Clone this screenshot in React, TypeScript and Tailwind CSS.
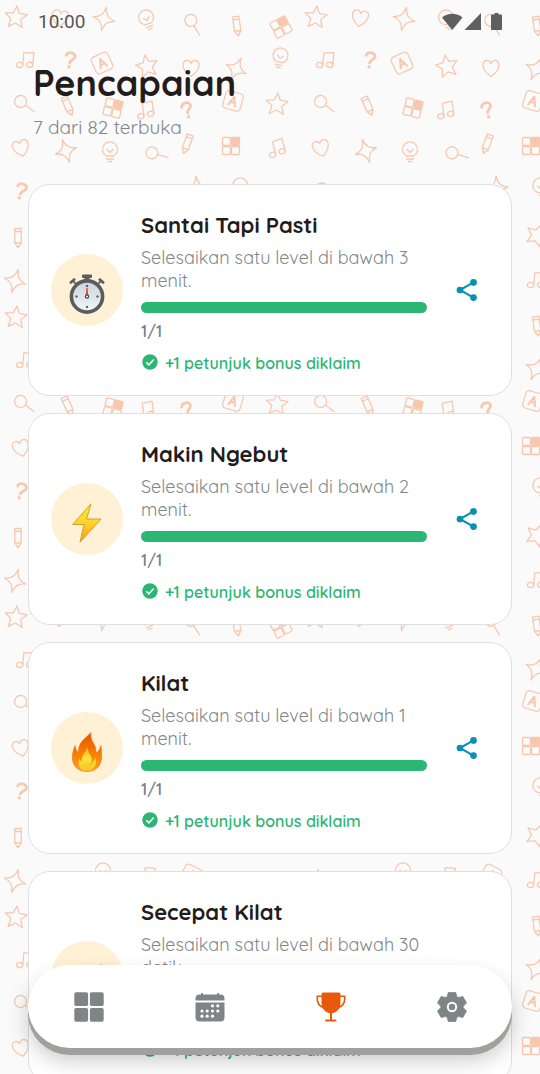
import type { ReactNode } from "react";

const STAR = "M0-11 L3-4 L11-3.2 L5 2 L7 10 L0 6 L-7 10 L-5 2 L-11-3.2 L-3-4Z";
const SPARKLE = "M0-12 C1.5-4 4-1.5 11 0 C4 1.5 1.5 4 0 12 C-1.5 4-4 1.5-11 0 C-4-1.5-1.5-4 0-12Z";

function Doodles() {
  const star = <path d={STAR} />;
  const sparkle = <path d={SPARKLE} />;
  const heart = <path d="M0 8.500 C-5 5-8 1.500-8-3 C-8-8-2-9.500 0-4.500 C2-9.500 8-8 8-3 C8 1.500 5 5 0 8.500Z" />;
  const bulb = <path d="M-3.500 4 A7.500 7.500 0 1 1 3.500 4Z M-3-2.500 L0 0.500 L3-2.500 M-3.500 7 H3.500 M-2 9.500 H2" />;
  const lens = (
    <g>
      <circle cx={-3} cy={-3} r={6} />
      <path d="M1.500 1.500 L9 9" />
    </g>
  );
  const pencil = <path d="M-3.200-9.500 H3.200 V5 L0 10 L-3.200 5Z M-3.200-6.500 H3.200 M-3.200 5 H3.200 M-1 8.500 H1" />;
  const grid = (
    <g>
      <rect x={-8.500} y={-8.500} width={8} height={8} rx={1} />
      <rect x={0.500} y={-8.500} width={8} height={8} rx={1} fill="#f7c8ae" />
      <rect x={-8.500} y={0.500} width={8} height={8} rx={1} />
      <rect x={0.500} y={0.500} width={8} height={8} rx={1} />
    </g>
  );
  const note = (
    <g>
      <ellipse cx={-6} cy={5.500} rx={3.200} ry={2.600} />
      <ellipse cx={4} cy={4.500} rx={3.200} ry={2.600} />
      <path d="M-2.800 5.500 V-7 L7.200-8 V4.500" />
    </g>
  );
  const question = (
    <g>
      <path strokeWidth={2.800} d="M-4.500-4 C-4-8.500 5-8.500 4.500-3.500 C4.200-0.500 0-0.500 0 3" />
      <circle cy={7} r={0.700} strokeWidth={2} />
    </g>
  );
  const tile = (
    <g>
      <rect x={-9} y={-9} width={18} height={18} rx={3.500} />
      <path strokeWidth={2} d="M-3.500 4.500 L0-4.500 L3.500 4.500 M-2.300 1.500 H2.300" />
    </g>
  );
  const items: [number, number, number, ReactNode][] = [
    [16, 17, 5, star], [60, 18, 10, heart], [104, 19, 12, sparkle], [147, 20, -20, bulb], [193, 24, 15, lens], [237, 26, -8, pencil], [281, 27, -28, grid],
    [26, 60, 5, note], [70, 60, 8, question], [102, 63, -25, tile], [147, 66, -12, star], [191, 68, 0, heart], [236, 69, 25, sparkle], [280, 58, 12, bulb],
    [24, 104, -8, lens], [68, 106, -24, pencil], [113, 108, 14, grid], [146, 110, -8, note], [187, 110, -14, question], [233, 101, 17, tile], [277, 104, 4, star],
    [21, 148, -15, heart], [66, 151, -18, sparkle], [110, 152, 0, bulb], [156, 154, -28, lens], [187, 144, 20, pencil], [231, 146, 0, grid], [277, 148, -15, note],
    [21, 191, 14, question], [197, 188, -5, sparkle], [241, 188, -15, bulb],
    [18, 238, 0, pencil], [237, 235, 22, star], [15, 281, 16, sparkle], [237, 280, 5, note],
    [103, 273, 0, bulb], [147, 275, 10, note], [191, 275, 27, tile],
  ];
  return (
    <svg aria-hidden="true" className="pointer-events-none absolute inset-0 h-full w-full">
      <defs>
        <pattern id="doodles" width={300} height={300} patternUnits="userSpaceOnUse">
          <g fill="none" stroke="#f7c8ae" strokeWidth={1.300} strokeLinejoin="round" strokeLinecap="round">
            {items.map(([x, y, r, shape], i) => (
              <g key={i} transform={`translate(${x} ${y}) rotate(${r})`}>{shape}</g>
            ))}
          </g>
        </pattern>
      </defs>
      <rect width="100%" height="100%" fill="url(#doodles)" />
    </svg>
  );
}

function Stopwatch() {
  return (
    <svg viewBox="0 0 36 42" className="h-[42px] w-9" aria-hidden="true">
      <defs>
        <linearGradient id="dial" x1="0" y1="0" x2="0" y2="1">
          <stop offset="0" stopColor="#c9d3dc" />
          <stop offset="1" stopColor="#f4f7f9" />
        </linearGradient>
      </defs>
      <path d="M15.500 4 H20.500 V8 H15.500Z" fill="#616161" />
      <rect x="13" y="1.500" width="10" height="3.500" rx="1" fill="#5c5c5c" />
      <path d="M4 8 L8 12 M32 8 L28 12" stroke="#757575" strokeWidth="2.400" />
      <path d="M1.800 9.500 L5.200 6.500 M34.200 9.500 L30.800 6.500" stroke="#5c5c5c" strokeWidth="2.600" strokeLinecap="round" />
      <circle cx="18" cy="23.500" r="15.600" fill="url(#dial)" stroke="#5c5c5c" strokeWidth="3.600" />
      <g fill="#56656e">
        <circle cx="18" cy="13" r="1.200" />
        <circle cx="18" cy="34" r="1.200" />
        <circle cx="7.500" cy="23.500" r="1.200" />
        <circle cx="28.500" cy="23.500" r="1.200" />
      </g>
      <path d="M17.300 15 H18.700 L19.300 24 H16.700Z" fill="#f44336" />
      <circle cx="18" cy="23.500" r="1.600" fill="#fff" stroke="#37474f" strokeWidth="1.200" />
    </svg>
  );
}

function Bolt() {
  return (
    <svg viewBox="0 0 30 40" className="h-10 w-[30px]" aria-hidden="true">
      <defs>
        <linearGradient id="bolt" x1="0" y1="0" x2="0" y2="1">
          <stop offset="0" stopColor="#feea2d" />
          <stop offset="0.5" stopColor="#fdd52a" />
          <stop offset="1" stopColor="#f59b1d" />
        </linearGradient>
      </defs>
      <path d="M19 0.800 L0.600 21.500 H12 L8 39.200 L29 16 H14.500Z" fill="url(#bolt)" stroke="#d3a12a" strokeWidth="1" strokeLinejoin="round" />
    </svg>
  );
}

function Flame() {
  return (
    <svg viewBox="0 0 30 40" className="h-10 w-[30px]" aria-hidden="true">
      <defs>
        <linearGradient id="flame" x1="0" y1="0" x2="0" y2="1">
          <stop offset="0" stopColor="#e65100" />
          <stop offset="0.5" stopColor="#f57c00" />
          <stop offset="1" stopColor="#ffa21a" />
        </linearGradient>
        <linearGradient id="ember" x1="0" y1="0" x2="0" y2="1">
          <stop offset="0" stopColor="#fbb034" />
          <stop offset="0.5" stopColor="#fde236" />
          <stop offset="1" stopColor="#fbc02d" />
        </linearGradient>
      </defs>
      <path d="M19 0.500 C18 7 21 10 23 14 C23.800 16.500 24 19 24 21 C26.500 19.500 28 17 29 13.500 C29.500 18 29.700 21 29.600 26 C29 34.500 23 39.500 15 39.500 C6.500 39.500 0.500 34 0.400 26 C0.300 21 1.500 18 3 13.500 C3.500 17 4.500 19 6.500 20.500 C6 10 13 7 19 0.500Z" fill="url(#flame)" stroke="#e07016" strokeWidth="0.600" />
      <path d="M15.500 14.500 C15.500 19 17 21.500 19 24 C20 26 20 28 19.500 30 C21.500 29 22.500 27.500 23 25.500 C25.500 32 22.500 39 15 39 C8 39 5 33 7.500 27 C8.500 28.500 9 29 10 29.500 C9 23 14.500 20 15.500 14.500Z" fill="url(#ember)" />
      <path d="M19.800 26 C20 29 19.500 31 17 33 C20.500 32.500 22.500 29.500 23 25.500 C22 27.500 21.500 28.500 19.500 30Z" fill="#e5a11c" opacity="0.700" />
    </svg>
  );
}

function Rocket() {
  return (
    <svg viewBox="0 0 36 42" className="h-[42px] w-9" aria-hidden="true">
      <path d="M34 5 C24 5 16 11 9 22 L17 30 C29 23 34 15 34 5Z" fill="#cfd8dc" />
      <path d="M34 5 C30 4.500 27 5.500 24 7 C26 10 29 13 32 15 C33.500 11 34.200 9 34 5Z" fill="#c8473c" />
      <path d="M12 18 L3 21 L7 25Z M21 27 L18 36 L14 32Z" fill="#c62828" />
    </svg>
  );
}

function CheckBadge() {
  return (
    <svg viewBox="0 0 24 24" className="-mt-0.5 h-[18px] w-[18px]" aria-hidden="true">
      <circle cx="12" cy="12" r="10.300" fill="#2bb673" />
      <path d="M7 12.300 L10.500 15.800 L17 8.800" fill="none" stroke="#fff" strokeWidth="1.900" />
    </svg>
  );
}

function ShareIcon() {
  return (
    <svg viewBox="0 0 24 24" className="h-[26px] w-[26px]" aria-hidden="true">
      <path d="M18 5 L5.500 12 L18 19" fill="none" stroke="#0891b2" strokeWidth="1.900" />
      <g fill="#0891b2">
        <circle cx="18" cy="5" r="3.100" />
        <circle cx="5.500" cy="12" r="3.100" />
        <circle cx="18" cy="19" r="3.100" />
      </g>
    </svg>
  );
}

const achievements = [
  { title: "Santai Tapi Pasti", text: "Selesaikan satu level di bawah 3 menit.", icon: <Stopwatch /> },
  { title: "Makin Ngebut", text: "Selesaikan satu level di bawah 2 menit.", icon: <Bolt /> },
  { title: "Kilat", text: "Selesaikan satu level di bawah 1 menit.", icon: <Flame /> },
  { title: "Secepat Kilat", text: "Selesaikan satu level di bawah 30 detik.", icon: <Rocket /> },
];

function AchievementCard({ title, text, icon }: { title: string; text: string; icon: ReactNode }) {
  return (
    <li className="flex items-center gap-[18px] rounded-[22px] border border-[#dfe0e0] bg-white p-[22px]">
      <div className="flex h-[72px] w-[72px] shrink-0 items-center justify-center rounded-full bg-[#fff1d6] pt-2">{icon}</div>
      <div className="min-w-0 flex-1">
        <h2 className="pt-1 text-[22px] leading-7 font-bold text-[#231c1a]">{title}</h2>
        <p className="mt-[7px] text-[18px] leading-[23px] text-[#82878a]">{text}</p>
        <div role="progressbar" aria-label={title} aria-valuenow={1} aria-valuemin={0} aria-valuemax={1} className="mt-2.5 h-[11px] rounded-full bg-[#2bb673]" />
        <p className="mt-2 text-[16px] leading-5 font-semibold text-[#7c8184]">1/1</p>
        <p className="mt-3 flex items-center gap-1.5 text-[16px] leading-5 font-semibold text-[#2bb673]">
          <CheckBadge />
          +1 petunjuk bonus diklaim
        </p>
      </div>
      <button type="button" aria-label="Bagikan" className="flex h-11 w-11 shrink-0 items-center justify-center">
        <ShareIcon />
      </button>
    </li>
  );
}

function NavLink({ label, active, children }: { label: string; active?: boolean; children: ReactNode }) {
  return (
    <a href="#" aria-label={label} aria-current={active ? "page" : undefined} className={"flex flex-1 items-center justify-center " + (active ? "text-[#e8590c]" : "text-[#7f8587]")}>
      <svg viewBox="0 0 30 30" className="h-[30px] w-[30px]" fill="currentColor" aria-hidden="true">{children}</svg>
    </a>
  );
}

export default function App() {
  return (
    <div className="relative flex h-screen flex-col overflow-hidden bg-[#fafafa] font-['Quicksand','Noto_Sans',sans-serif]">
      <Doodles />
      <div className="relative flex h-11 shrink-0 items-center justify-between pr-9 pl-[38px] text-[#575757]">
        <span className="font-['Roboto',sans-serif] text-[19px] leading-6">10:00</span>
        <svg viewBox="0 0 62 20" className="h-5 w-[62px] opacity-95" fill="currentColor" aria-hidden="true">
          <path d="M0 5.500 C6 0.500 14.500 0.500 20.500 5.500 L10.300 18Z" />
          <path d="M39 1 V18 H22.500Z" />
          <path d="M49.500 2.500 H52.500 V1 H56.500 V2.500 H59.500 Q60 2.500 60 3.200 V17.300 Q60 18 59.500 18 H49.500 Q49 18 49 17.300 V3.200 Q49 2.500 49.500 2.500Z" />
        </svg>
      </div>
      <header className="relative shrink-0 px-[33px] pt-4">
        <h1 className="text-[36px] leading-[45px] font-bold text-[#231c1a]">Pencapaian</h1>
        <p className="mt-2.5 text-[19px] leading-6 text-[#82878a]">7 dari 82 terbuka</p>
      </header>
      <main className="relative mt-[45px] min-h-0 flex-1 overflow-y-auto px-7 [scrollbar-width:none]">
        <ul className="flex flex-col gap-[17px] pb-32">
          {achievements.map((a) => (
            <AchievementCard key={a.title} {...a} />
          ))}
        </ul>
      </main>
      <nav aria-label="Navigasi utama" className="absolute inset-x-7 bottom-[26px] flex h-[83px] rounded-full bg-white shadow-[0_7px_0_#a0a09f,0_12px_22px_rgba(0,0,0,0.22)]">
        <NavLink label="Beranda">
          <rect x="0.300" y="0.300" width="13.800" height="13.800" rx="1.800" />
          <rect x="15.900" y="0.300" width="13.800" height="13.800" rx="1.800" />
          <rect x="0.300" y="15.900" width="13.800" height="13.800" rx="1.800" />
          <rect x="15.900" y="15.900" width="13.800" height="13.800" rx="1.800" />
        </NavLink>
        <NavLink label="Kalender">
          <path d="M0.500 8.500 V6.500 Q0.500 2.500 4.500 2.500 H6 V1.500 Q7 0 8 1.500 V2.500 H22 V1.500 Q23 0 24 1.500 V2.500 H25.500 Q29.500 2.500 29.500 6.500 V8.500Z" />
          <path d="M0.500 10.500 H29.500 V25.500 Q29.500 29.500 25.500 29.500 H4.500 Q0.500 29.500 0.500 25.500Z" />
          <g fill="#fff">
            <circle cx="17.500" cy="13.800" r="1.600" />
            <circle cx="22.800" cy="13.800" r="1.600" />
            <circle cx="7" cy="19" r="1.600" />
            <circle cx="12.200" cy="19" r="1.600" />
            <circle cx="17.500" cy="19" r="1.600" />
            <circle cx="22.800" cy="19" r="1.600" />
            <circle cx="7" cy="24.200" r="1.600" />
            <circle cx="12.200" cy="24.200" r="1.600" />
            <circle cx="17.500" cy="24.200" r="1.600" />
          </g>
        </NavLink>
        <NavLink label="Pencapaian" active>
          <path d="M7 0.500 H23 Q24.500 0.500 24.500 2 V11 C24.500 17 20.500 20.500 16 21.300 V27.500 H19.500 Q20.500 27.500 20.500 28.500 T19.500 29.500 H10 Q9 29.500 9 28.500 T10 27.500 H14 V21.300 C9.500 20.500 5.500 17 5.500 11 V2 Q5.500 0.500 7 0.500Z" />
          <path d="M6 4.300 H1.300 C0.800 9.500 3 14 7.500 15.500 M24 4.300 H28.700 C29.200 9.500 27 14 22.500 15.500" fill="none" stroke="currentColor" strokeWidth="1.600" />
        </NavLink>
        <NavLink label="Pengaturan">
          <g>
            <circle cx="15" cy="15" r="11" />
            {[0, 60, 120].map((angle) => (
              <path key={angle} transform={`rotate(${angle} 15 15)`} d="M11.300 0.300 H18.700 L20.500 6 V24 L18.700 29.700 H11.300 L9.500 24 V6Z" stroke="currentColor" strokeWidth="0.600" strokeLinejoin="round" />
            ))}
            <circle cx="15" cy="15" r="4.200" fill="none" stroke="#fff" strokeWidth="2" />
          </g>
        </NavLink>
      </nav>
    </div>
  );
}
